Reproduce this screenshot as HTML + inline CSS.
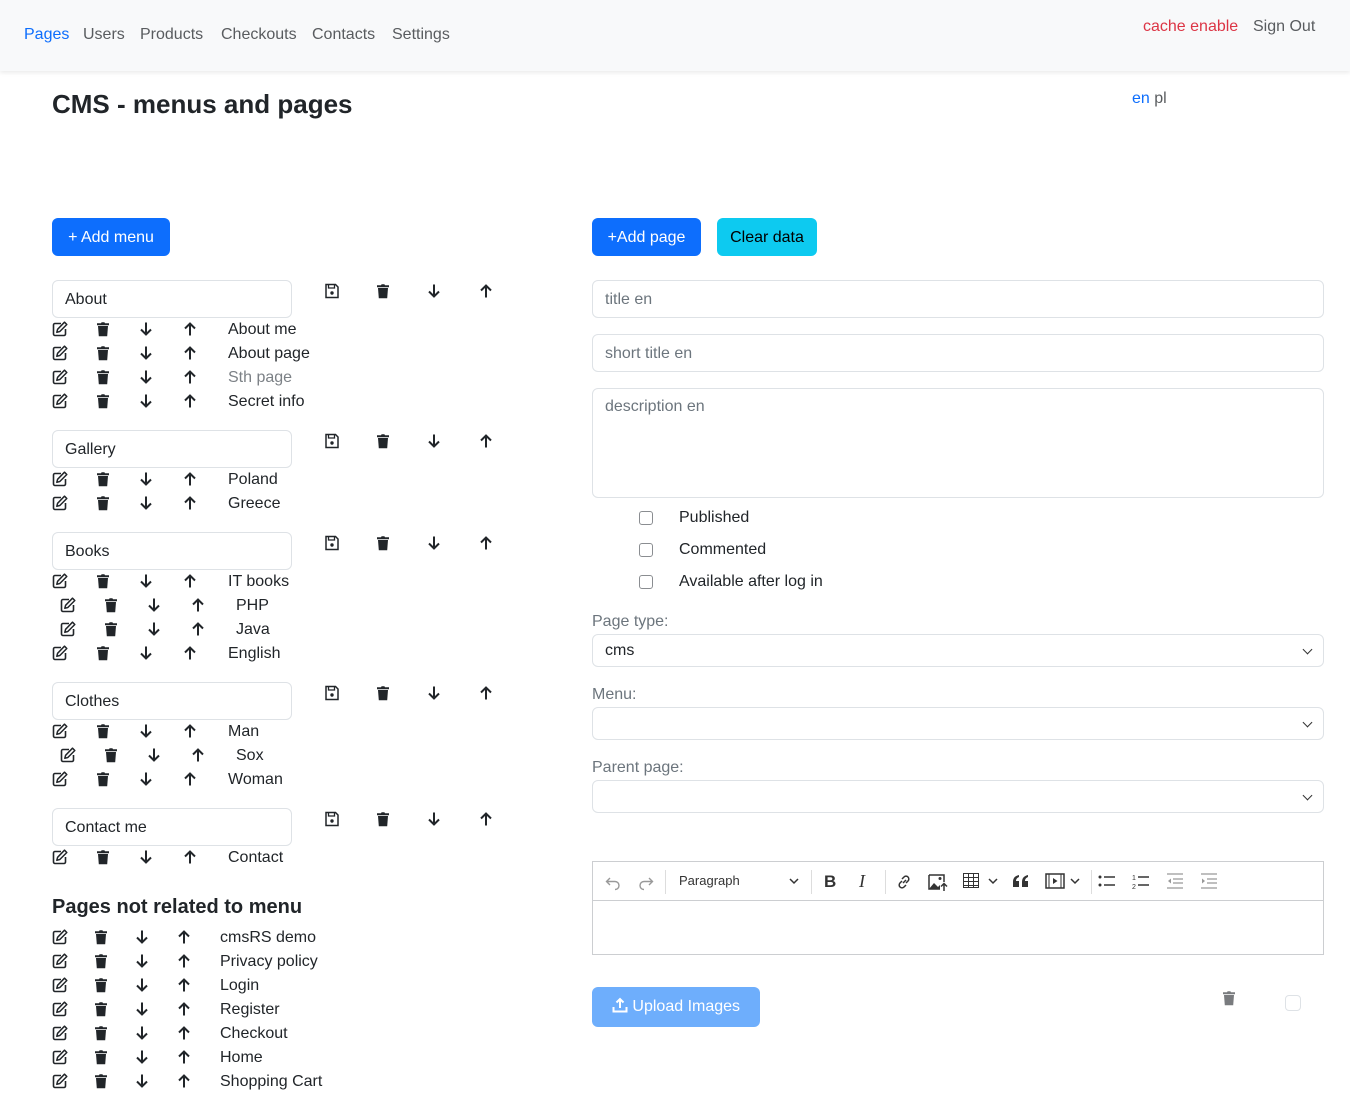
<!DOCTYPE html>
<html><head><meta charset="utf-8">
<style>
*{box-sizing:border-box;margin:0;padding:0}
body{width:1350px;height:1076px;overflow:hidden;background:#fff;font-family:"Liberation Sans",sans-serif;color:#212529;font-size:16px;position:relative}
.a{position:absolute}
nav{position:absolute;left:0;top:0;width:1350px;height:71px;background:#f8f9fa;box-shadow:0 2px 4px rgba(0,0,0,.08)}
nav span{position:absolute;top:26px;color:#595c5f;font-size:16px}
.r{position:absolute;height:24px;width:300px}
.r svg,.m svg{position:absolute;top:4px;width:16px;height:16px}
.r .t{position:absolute;top:1px;line-height:24px;white-space:nowrap}
.box{position:absolute;left:52px;width:240px;height:38px;border:1px solid #dee2e6;border-radius:6px;padding:0 12px;line-height:37px}
.m{position:absolute;height:24px;width:200px;left:322px}
.inp{position:absolute;left:592px;width:732px;border:1px solid #dee2e6;border-radius:6px;padding:0 12px;color:#6c757d}
.cb{position:absolute;left:639px;width:14px;height:14px;border:1.5px solid #8a8d91;border-radius:3px}
.lbl{position:absolute;left:679px;line-height:24px}
.gl{position:absolute;left:592px;color:#6c757d}
.sel{position:absolute;left:592px;width:732px;height:33px;border:1px solid #dee2e6;border-radius:6px;padding:0 12px;line-height:32px}
.sel:after{content:"";position:absolute;right:12px;top:11px;width:6px;height:6px;border-right:1.5px solid #333;border-bottom:1.5px solid #333;transform:rotate(45deg)}
.btn{position:absolute;height:38px;border-radius:6px;line-height:39px;font-size:16px;text-align:center}
.tb{position:absolute;top:11px}
</style></head><body>
<svg width="0" height="0" style="position:absolute">
<defs>
<symbol id="ed" viewBox="0 0 16 16"><path d="M9 2.5H3a1.5 1.5 0 0 0-1.5 1.5v9A1.5 1.5 0 0 0 3 14.5h9A1.5 1.5 0 0 0 13.5 13V8" fill="none" stroke="#212529" stroke-width="1.6"/><path d="M12.5 1.2l2.3 2.3-7 7-3 .8.8-3z" fill="none" stroke="#212529" stroke-width="1.5" stroke-linejoin="round"/></symbol>
<symbol id="tr" viewBox="0 0 16 16"><path d="M2 2.2h4l.6-1h2.8l.6 1h4v2H2z" fill="#212529"/><path d="M3 5h10l-.8 10.2H3.8z" fill="#212529"/></symbol>
<symbol id="dn" viewBox="0 0 16 16"><path d="M8 1.5v12M3 8.5l5 5 5-5" fill="none" stroke="#212529" stroke-width="2"/></symbol>
<symbol id="up" viewBox="0 0 16 16"><path d="M8 14.5v-12M3 7.5l5-5 5 5" fill="none" stroke="#212529" stroke-width="2"/></symbol>
<symbol id="sv" viewBox="0 0 16 16"><path d="M2 1.5h9.5l2.5 2.5v10.5H2z" fill="none" stroke="#212529" stroke-width="1.5"/><path d="M4.5 1.5v3.5h6V1.5" fill="none" stroke="#212529" stroke-width="1.3"/><circle cx="8" cy="10" r="1.7" fill="#212529"/></symbol>
</defs></svg>

<nav>
<span style="left:24px;color:#0d6efd">Pages</span>
<span style="left:83px">Users</span>
<span style="left:140px">Products</span>
<span style="left:221px">Checkouts</span>
<span style="left:312px">Contacts</span>
<span style="left:392px">Settings</span>
<span style="left:1143px;top:18px;color:#dc3545">cache enable</span>
<span style="left:1253px;top:18px">Sign Out</span>
</nav>
<div class="a" style="left:52px;top:88px;font-size:26px;font-weight:bold;line-height:32px">CMS - menus and pages</div>
<div class="a" style="left:1132px;top:89px;line-height:20px"><span style="color:#0d6efd">en</span> <span style="color:#595c5f">pl</span></div>

<div class="btn" style="left:52px;top:218px;width:118px;background:#0d6efd;color:#fff">+ Add menu</div>
<div class="btn" style="left:592px;top:218px;width:109px;background:#0d6efd;color:#fff">+Add page</div>
<div class="btn" style="left:717px;top:218px;width:100px;background:#0dcaf0;color:#000">Clear data</div>

<div class="box" style="top:280px">About</div>
<div class="m" style="top:279px"><svg style="left:2px"><use href="#sv"/></svg><svg style="left:53px"><use href="#tr"/></svg><svg style="left:104px"><use href="#dn"/></svg><svg style="left:156px"><use href="#up"/></svg></div>
<div class="box" style="top:430px">Gallery</div>
<div class="m" style="top:429px"><svg style="left:2px"><use href="#sv"/></svg><svg style="left:53px"><use href="#tr"/></svg><svg style="left:104px"><use href="#dn"/></svg><svg style="left:156px"><use href="#up"/></svg></div>
<div class="box" style="top:532px">Books</div>
<div class="m" style="top:531px"><svg style="left:2px"><use href="#sv"/></svg><svg style="left:53px"><use href="#tr"/></svg><svg style="left:104px"><use href="#dn"/></svg><svg style="left:156px"><use href="#up"/></svg></div>
<div class="box" style="top:682px">Clothes</div>
<div class="m" style="top:681px"><svg style="left:2px"><use href="#sv"/></svg><svg style="left:53px"><use href="#tr"/></svg><svg style="left:104px"><use href="#dn"/></svg><svg style="left:156px"><use href="#up"/></svg></div>
<div class="box" style="top:808px">Contact me</div>
<div class="m" style="top:807px"><svg style="left:2px"><use href="#sv"/></svg><svg style="left:53px"><use href="#tr"/></svg><svg style="left:104px"><use href="#dn"/></svg><svg style="left:156px"><use href="#up"/></svg></div>

<div class="r" style="left:52px;top:317px"><svg style="left:0"><use href="#ed"/></svg><svg style="left:43px"><use href="#tr"/></svg><svg style="left:86px"><use href="#dn"/></svg><svg style="left:130px"><use href="#up"/></svg><span class="t" style="left:176px">About me</span></div>
<div class="r" style="left:52px;top:341px"><svg style="left:0"><use href="#ed"/></svg><svg style="left:43px"><use href="#tr"/></svg><svg style="left:86px"><use href="#dn"/></svg><svg style="left:130px"><use href="#up"/></svg><span class="t" style="left:176px">About page</span></div>
<div class="r" style="left:52px;top:365px"><svg style="left:0"><use href="#ed"/></svg><svg style="left:43px"><use href="#tr"/></svg><svg style="left:86px"><use href="#dn"/></svg><svg style="left:130px"><use href="#up"/></svg><span class="t" style="left:176px;color:#7c8186">Sth page</span></div>
<div class="r" style="left:52px;top:389px"><svg style="left:0"><use href="#ed"/></svg><svg style="left:43px"><use href="#tr"/></svg><svg style="left:86px"><use href="#dn"/></svg><svg style="left:130px"><use href="#up"/></svg><span class="t" style="left:176px">Secret info</span></div>

<div class="r" style="left:52px;top:467px"><svg style="left:0"><use href="#ed"/></svg><svg style="left:43px"><use href="#tr"/></svg><svg style="left:86px"><use href="#dn"/></svg><svg style="left:130px"><use href="#up"/></svg><span class="t" style="left:176px">Poland</span></div>
<div class="r" style="left:52px;top:491px"><svg style="left:0"><use href="#ed"/></svg><svg style="left:43px"><use href="#tr"/></svg><svg style="left:86px"><use href="#dn"/></svg><svg style="left:130px"><use href="#up"/></svg><span class="t" style="left:176px">Greece</span></div>

<div class="r" style="left:52px;top:569px"><svg style="left:0"><use href="#ed"/></svg><svg style="left:43px"><use href="#tr"/></svg><svg style="left:86px"><use href="#dn"/></svg><svg style="left:130px"><use href="#up"/></svg><span class="t" style="left:176px">IT books</span></div>
<div class="r" style="left:60px;top:593px"><svg style="left:0"><use href="#ed"/></svg><svg style="left:43px"><use href="#tr"/></svg><svg style="left:86px"><use href="#dn"/></svg><svg style="left:130px"><use href="#up"/></svg><span class="t" style="left:176px">PHP</span></div>
<div class="r" style="left:60px;top:617px"><svg style="left:0"><use href="#ed"/></svg><svg style="left:43px"><use href="#tr"/></svg><svg style="left:86px"><use href="#dn"/></svg><svg style="left:130px"><use href="#up"/></svg><span class="t" style="left:176px">Java</span></div>
<div class="r" style="left:52px;top:641px"><svg style="left:0"><use href="#ed"/></svg><svg style="left:43px"><use href="#tr"/></svg><svg style="left:86px"><use href="#dn"/></svg><svg style="left:130px"><use href="#up"/></svg><span class="t" style="left:176px">English</span></div>

<div class="r" style="left:52px;top:719px"><svg style="left:0"><use href="#ed"/></svg><svg style="left:43px"><use href="#tr"/></svg><svg style="left:86px"><use href="#dn"/></svg><svg style="left:130px"><use href="#up"/></svg><span class="t" style="left:176px">Man</span></div>
<div class="r" style="left:60px;top:743px"><svg style="left:0"><use href="#ed"/></svg><svg style="left:43px"><use href="#tr"/></svg><svg style="left:86px"><use href="#dn"/></svg><svg style="left:130px"><use href="#up"/></svg><span class="t" style="left:176px">Sox</span></div>
<div class="r" style="left:52px;top:767px"><svg style="left:0"><use href="#ed"/></svg><svg style="left:43px"><use href="#tr"/></svg><svg style="left:86px"><use href="#dn"/></svg><svg style="left:130px"><use href="#up"/></svg><span class="t" style="left:176px">Woman</span></div>

<div class="r" style="left:52px;top:845px"><svg style="left:0"><use href="#ed"/></svg><svg style="left:43px"><use href="#tr"/></svg><svg style="left:86px"><use href="#dn"/></svg><svg style="left:130px"><use href="#up"/></svg><span class="t" style="left:176px">Contact</span></div>

<div class="a" style="left:52px;top:894px;font-size:20px;font-weight:bold;line-height:26px">Pages not related to menu</div>
<div class="r" style="left:52px;top:925px"><svg style="left:0"><use href="#ed"/></svg><svg style="left:41px"><use href="#tr"/></svg><svg style="left:82px"><use href="#dn"/></svg><svg style="left:124px"><use href="#up"/></svg><span class="t" style="left:168px">cmsRS demo</span></div>
<div class="r" style="left:52px;top:949px"><svg style="left:0"><use href="#ed"/></svg><svg style="left:41px"><use href="#tr"/></svg><svg style="left:82px"><use href="#dn"/></svg><svg style="left:124px"><use href="#up"/></svg><span class="t" style="left:168px">Privacy policy</span></div>
<div class="r" style="left:52px;top:973px"><svg style="left:0"><use href="#ed"/></svg><svg style="left:41px"><use href="#tr"/></svg><svg style="left:82px"><use href="#dn"/></svg><svg style="left:124px"><use href="#up"/></svg><span class="t" style="left:168px">Login</span></div>
<div class="r" style="left:52px;top:997px"><svg style="left:0"><use href="#ed"/></svg><svg style="left:41px"><use href="#tr"/></svg><svg style="left:82px"><use href="#dn"/></svg><svg style="left:124px"><use href="#up"/></svg><span class="t" style="left:168px">Register</span></div>
<div class="r" style="left:52px;top:1021px"><svg style="left:0"><use href="#ed"/></svg><svg style="left:41px"><use href="#tr"/></svg><svg style="left:82px"><use href="#dn"/></svg><svg style="left:124px"><use href="#up"/></svg><span class="t" style="left:168px">Checkout</span></div>
<div class="r" style="left:52px;top:1045px"><svg style="left:0"><use href="#ed"/></svg><svg style="left:41px"><use href="#tr"/></svg><svg style="left:82px"><use href="#dn"/></svg><svg style="left:124px"><use href="#up"/></svg><span class="t" style="left:168px">Home</span></div>
<div class="r" style="left:52px;top:1069px"><svg style="left:0"><use href="#ed"/></svg><svg style="left:41px"><use href="#tr"/></svg><svg style="left:82px"><use href="#dn"/></svg><svg style="left:124px"><use href="#up"/></svg><span class="t" style="left:168px">Shopping Cart</span></div>

<div class="inp" style="top:280px;height:38px;line-height:37px">title en</div>
<div class="inp" style="top:334px;height:38px;line-height:37px">short title en</div>
<div class="inp" style="top:388px;height:110px;padding-top:6px;line-height:24px">description en</div>
<div class="cb" style="top:511px"></div><div class="lbl" style="top:506px">Published</div>
<div class="cb" style="top:543px"></div><div class="lbl" style="top:538px">Commented</div>
<div class="cb" style="top:575px"></div><div class="lbl" style="top:570px">Available after log in</div>
<div class="gl" style="top:612px;line-height:20px">Page type:</div>
<div class="sel" style="top:634px">cms</div>
<div class="gl" style="top:685px;line-height:20px">Menu:</div>
<div class="sel" style="top:707px"></div>
<div class="gl" style="top:758px;line-height:20px">Parent page:</div>
<div class="sel" style="top:780px"></div>

<div class="a" style="left:592px;top:861px;width:732px;height:94px;border:1px solid #ccced1">
 <div style="position:absolute;left:0;top:0;width:730px;height:39px;border-bottom:1px solid #ccced1;font-size:13px;color:#333">
  <svg class="tb" style="left:11px" width="18" height="18" viewBox="0 0 18 18"><path d="M6 5L2.5 8.5 6 12M3 8.5h8a4 4 0 0 1 0 8" fill="none" stroke="#999" stroke-width="1.4"/></svg>
  <svg class="tb" style="left:44px" width="18" height="18" viewBox="0 0 18 18"><path d="M12 5l3.5 3.5L12 12M15 8.5H7a4 4 0 0 0 0 8" fill="none" stroke="#999" stroke-width="1.4"/></svg>
  <div class="a" style="left:72px;top:8px;width:1px;height:24px;background:#ddd"></div>
  <span class="a" style="left:86px;top:11px">Paragraph</span>
  <svg class="tb" style="left:196px;top:15px" width="10" height="8"><path d="M1 2l4 4 4-4" fill="none" stroke="#333" stroke-width="1.5"/></svg>
  <div class="a" style="left:218px;top:8px;width:1px;height:24px;background:#ddd"></div>
  <span class="a" style="left:231px;top:10px;font-size:17px;font-weight:bold">B</span>
  <span class="a" style="left:266px;top:9px;font-size:18px;font-style:italic;font-family:'Liberation Serif',serif">I</span>
  <div class="a" style="left:292px;top:8px;width:1px;height:24px;background:#ddd"></div>
  <svg class="tb" style="left:302px" width="18" height="18" viewBox="0 0 18 18"><path d="M8 10l3-3M7 6l2-2a2.8 2.8 0 0 1 4 4l-2 2M11 12l-2 2a2.8 2.8 0 0 1-4-4l2-2" fill="none" stroke="#333" stroke-width="1.5"/></svg>
  <svg class="tb" style="left:335px" width="20" height="18" viewBox="0 0 20 18"><path d="M1 2h15v7" fill="none" stroke="#333" stroke-width="1.5"/><path d="M1 2v14h11" fill="none" stroke="#333" stroke-width="1.5"/><path d="M1 16l5-6 4 4 2-2v4z" fill="#333"/><circle cx="12" cy="5.5" r="1.5" fill="#333"/><path d="M16 18v-7M13 13.5l3-3 3 3" fill="none" stroke="#333" stroke-width="1.5"/></svg>
  <div class="a" style="left:370px;top:11px;width:16px;height:15px;border:1.5px solid #333;background:repeating-linear-gradient(90deg,transparent 0 4px,#333 4px 5px),repeating-linear-gradient(transparent 0 3px,#333 3px 4px)"></div>
  <svg class="tb" style="left:395px;top:15px" width="10" height="8"><path d="M1 2l4 4 4-4" fill="none" stroke="#333" stroke-width="1.5"/></svg>
  <svg class="tb" style="left:419px;top:12px" width="18" height="14" viewBox="0 0 18 14"><path d="M1 13V8c0-4 2-6 6-7v2C5 4 4 5 4 7h3v6zM10 13V8c0-4 2-6 6-7v2c-2 1-3 2-3 4h3v6z" fill="#333"/></svg>
  <svg class="tb" style="left:452px" width="20" height="16" viewBox="0 0 20 16"><rect x="1" y="1" width="18" height="14" fill="none" stroke="#333" stroke-width="1.5"/><path d="M4 1v14M16 1v14" stroke="#333"/><path d="M8 5v6l4.5-3z" fill="#333"/></svg>
  <svg class="tb" style="left:477px;top:15px" width="10" height="8"><path d="M1 2l4 4 4-4" fill="none" stroke="#333" stroke-width="1.5"/></svg>
  <div class="a" style="left:498px;top:8px;width:1px;height:24px;background:#ddd"></div>
  <svg class="tb" style="left:505px" width="18" height="16" viewBox="0 0 18 16"><circle cx="2" cy="4" r="1.5" fill="#333"/><circle cx="2" cy="12" r="1.5" fill="#333"/><path d="M6 4h11M6 12h11" stroke="#333" stroke-width="1.5"/></svg>
  <svg class="tb" style="left:539px" width="18" height="16" viewBox="0 0 18 16"><text x="0" y="7" font-size="7" font-family="Liberation Sans" fill="#333">1</text><text x="0" y="16" font-size="7" font-family="Liberation Sans" fill="#333">2</text><path d="M6 4h11M6 12h11" stroke="#333" stroke-width="1.5"/></svg>
  <svg class="tb" style="left:573px" width="18" height="16" viewBox="0 0 18 16"><path d="M1 1h16M7 6h10M7 10h10M1 15h16" stroke="#999" stroke-width="1.3"/><path d="M5 5.5L2 8l3 2.5z" fill="#999"/></svg>
  <svg class="tb" style="left:607px" width="18" height="16" viewBox="0 0 18 16"><path d="M1 1h16M7 6h10M7 10h10M1 15h16" stroke="#999" stroke-width="1.3"/><path d="M2 5.5L5 8l-3 2.5z" fill="#999"/></svg>
 </div>
</div>

<div class="btn" style="left:592px;top:987px;width:168px;height:40px;line-height:40px;background:#6eaefc;color:#fff"><svg width="16" height="16" viewBox="0 0 16 16" style="vertical-align:-2px"><path d="M8 11V2M4.5 5.5L8 2l3.5 3.5" fill="none" stroke="#fff" stroke-width="2"/><path d="M1.5 10v4.5h13V10" fill="none" stroke="#fff" stroke-width="2"/></svg> Upload Images</div>
<svg class="a" style="left:1221px;top:990px;opacity:.6" width="16" height="16"><use href="#tr"/></svg>
<div class="a" style="left:1285px;top:995px;width:16px;height:16px;border:1px solid #dee2e6;border-radius:4px"></div>
</body></html>
